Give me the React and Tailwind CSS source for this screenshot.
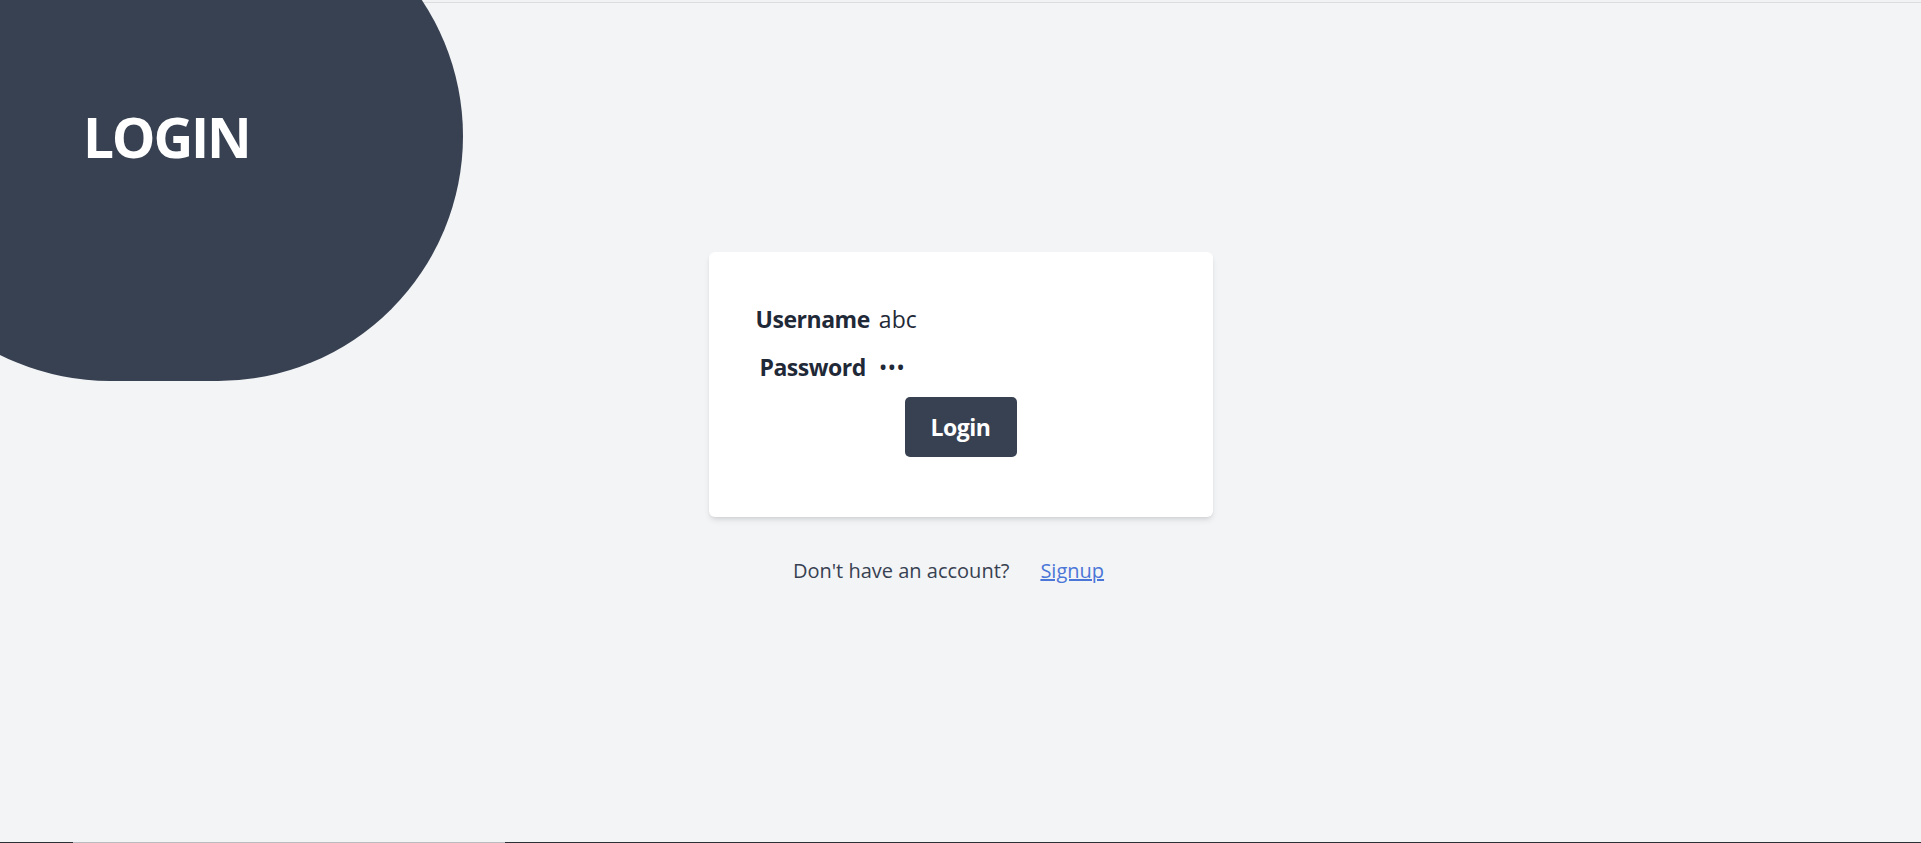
import { useState } from "react";

export default function App() {
  const [username, setUsername] = useState("abc");
  const [password, setPassword] = useState("abc");

  return (
    <div className="flex h-screen flex-col overflow-hidden bg-[#f3f4f6] font-['Open_Sans','Noto_Sans',sans-serif]">
      <div className="h-[3px] shrink-0 border-b border-[#dcdde0] bg-[#f1f2f4]" />

      <main className="relative flex-1">
        {/* decorative blob with page title */}
        <div className="absolute left-[-135px] top-[-112px] h-[490px] w-[598px] rounded-full bg-[#374151] pl-[218px] pt-[218px]">
          <h1 className="text-[55px] font-bold leading-none tracking-[-0.04em] text-white">LOGIN</h1>
        </div>

        <div className="relative flex flex-col items-center pt-[249px]">
          <form
            onSubmit={(e) => e.preventDefault()}
            className="w-[504px] rounded-md bg-white px-[47px] pb-[60px] pt-[49px] shadow-md"
          >
            <div className="grid grid-cols-[auto_1fr] gap-x-[9px] gap-y-[10px] text-[23px] leading-[37.5px] text-[#1f2937]">
              <label htmlFor="username" className="text-center font-bold tracking-[-0.02em]">
                Username
              </label>
              <input
                id="username"
                value={username}
                onChange={(e) => setUsername(e.target.value)}
                className="w-full bg-transparent text-[#1f2937] outline-none"
              />
              <label htmlFor="password" className="text-center font-bold tracking-[-0.02em]">
                Password
              </label>
              <input
                id="password"
                type="password"
                value={password}
                onChange={(e) => setPassword(e.target.value)}
                className="w-full bg-transparent outline-none"
              />
            </div>
            <div className="mt-[11px] flex justify-center">
              <button
                type="submit"
                className="flex h-[60px] w-[112px] items-center justify-center rounded-[5px] bg-[#374151] text-[23px] font-bold tracking-[-0.02em] text-white"
              >
                Login
              </button>
            </div>
          </form>

          <div className="mt-[39px] flex items-center gap-[31px] pr-[24px] text-[20px] text-[#374151]">
            <span>Don't have an account?</span>
            <a href="#" className="text-[#4a76d8] underline">
              Signup
            </a>
          </div>
        </div>
      </main>

      <div className="flex h-px shrink-0 bg-[#2b3036]">
        <div className="ml-[73px] w-[432px] bg-[#b9bbbe]" />
      </div>
    </div>
  );
}
